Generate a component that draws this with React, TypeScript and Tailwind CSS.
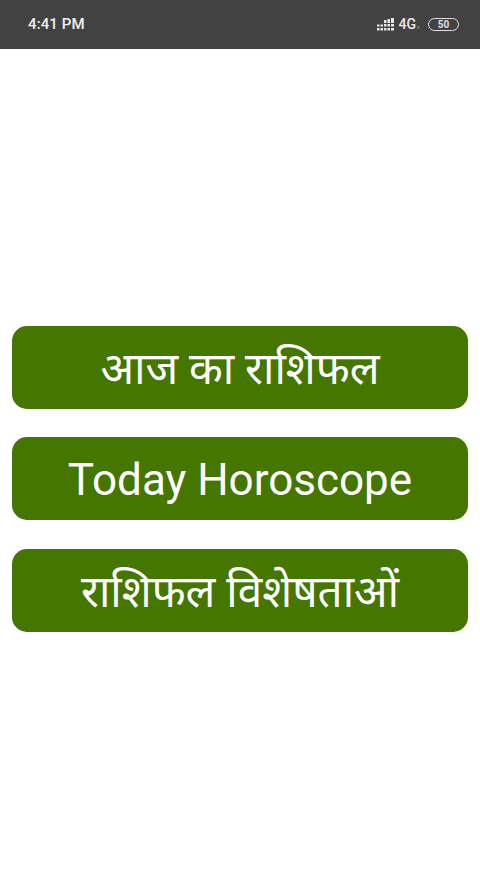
import React from 'react';

const labels = ['आज का राशिफल', 'Today Horoscope', 'राशिफल विशेषताओं'];

const SignalIcon = () => (
  <svg width="18" height="13" viewBox="0 0 18 13" fill="#e8e8e8">
    {/* top row only has the taller bars */}
    <rect x="7" y="2" width="2.5" height="3" />
    <rect x="10.5" y="1" width="2.5" height="4" />
    <rect x="14" y="0" width="3" height="5" />
    <rect x="0" y="6.5" width="2.5" height="2" />
    <rect x="3.5" y="6.5" width="2.5" height="2" />
    <rect x="7" y="6" width="2.5" height="2.5" />
    <rect x="10.5" y="6" width="2.5" height="2.5" />
    <rect x="14" y="6" width="3" height="2.5" />
    <rect x="0" y="10" width="2.5" height="2.5" />
    <rect x="3.5" y="10" width="2.5" height="2.5" />
    <rect x="7" y="10" width="2.5" height="2.5" />
    <rect x="10.5" y="10" width="2.5" height="2.5" />
    <rect x="14" y="10" width="3" height="2.5" />
  </svg>
);

const App: React.FC = () => {
  return (
    <div className="min-h-[869px] bg-white font-['Roboto','Noto_Sans','Noto_Sans_Devanagari','Lohit_Devanagari',sans-serif]">
      <header className="h-[49px] bg-[#424242] flex items-center justify-between pl-[28px] pr-[21px]">
        <span className="text-[15px] font-medium text-[#f0f0f0] tracking-[0.1px]">4:41 PM</span>
        <div className="flex items-center">
          <SignalIcon />
          <span className="ml-[4px] text-[14px] font-medium text-[#e8e8e8]">4G</span>
          <span className="ml-[1px] mt-[5px] w-[11px] h-[6px] text-[5px] leading-[6px] text-[#aaaaaa]">ıı</span>
          <div className="w-[31px] h-[13px] rounded-full border border-[#e0e0e0] flex items-center justify-center text-[10px] font-bold text-[#e0e0e0]">
            50
          </div>
        </div>
      </header>

      <main className="px-[12px] pt-[277px] flex flex-col gap-[28.4px]">
        {labels.map((label) => (
          <button
            key={label}
            className="h-[83px] pt-[3px] rounded-[15px] bg-[#447600] text-white text-[44px] flex items-center justify-center"
          >
            {label}
          </button>
        ))}
      </main>
    </div>
  );
};

export default App;
